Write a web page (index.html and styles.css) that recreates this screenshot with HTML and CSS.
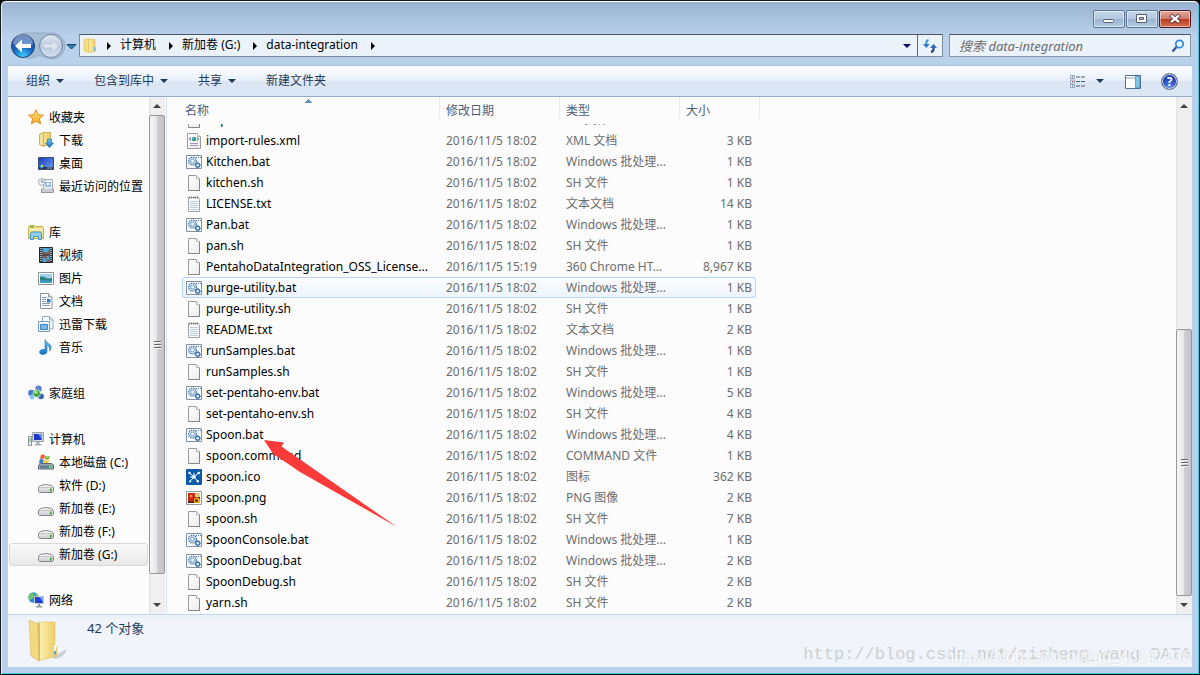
FILE: index.html
```html
<!DOCTYPE html>
<html lang="zh-CN">
<head>
<meta charset="utf-8">
<title>data-integration</title>
<link rel="stylesheet" href="styles.css">
</head>
<body>
<svg class="sprite" aria-hidden="true">
  <defs>
    <linearGradient id="gPage" x1="0" y1="0" x2="1" y2="1"><stop offset="0" stop-color="#fff"/><stop offset="1" stop-color="#ececec"/></linearGradient>
    <linearGradient id="gFold" x1="0" y1="0" x2="1" y2="0"><stop offset="0" stop-color="#fdf3b8"/><stop offset="1" stop-color="#ecca5e"/></linearGradient>
    <linearGradient id="gBlue" x1="0" y1="0" x2="0" y2="1"><stop offset="0" stop-color="#6fc6f3"/><stop offset="1" stop-color="#1272c4"/></linearGradient>
    <linearGradient id="gScreen" x1="0" y1="0" x2="1" y2="1"><stop offset="0" stop-color="#1739b8"/><stop offset="1" stop-color="#6ea4f0"/></linearGradient>
    <linearGradient id="gStar" x1="0" y1="0" x2="0" y2="1"><stop offset="0" stop-color="#fff27a"/><stop offset="1" stop-color="#f7a31c"/></linearGradient>
    <radialGradient id="gBack" cx=".5" cy=".95" r=".9"><stop offset="0" stop-color="#3fd0ff"/><stop offset=".5" stop-color="#1763bd"/><stop offset="1" stop-color="#2b4f9e"/></radialGradient>
    <linearGradient id="gFwd" x1="0" y1="0" x2="0" y2="1"><stop offset="0" stop-color="#e3ebf5"/><stop offset=".5" stop-color="#b9cbe2"/><stop offset="1" stop-color="#d3e0f0"/></linearGradient>
    <linearGradient id="gDrive" x1="0" y1="0" x2="0" y2="1"><stop offset="0" stop-color="#fff"/><stop offset="1" stop-color="#c9c9cf"/></linearGradient>
  </defs>
  <symbol id="page" viewBox="0 0 16 16"><path d="M2.5.5h8l3 3v12h-11z" fill="url(#gPage)" stroke="#9a9a9a"/><path d="M10.500.5v3h3" fill="#fff" stroke="#b5b5b5"/><path d="M13.500 4v11.500h-11" fill="none" stroke="#858585"/></symbol>
  <symbol id="xml" viewBox="0 0 16 16"><path d="M1.500.5h10l3 3v12h-13z" fill="url(#gPage)" stroke="#9a9a9a"/><path d="M11.500.5v3h3" fill="#fff" stroke="#b5b5b5"/><circle cx="8" cy="6" r="2.300" fill="#2a9a8e"/><circle cx="7.300" cy="5.300" r=".8" fill="#8fe0d0"/><path d="M5 4.500L3.300 6 5 7.500M11 4.500L12.700 6 11 7.500" fill="none" stroke="#3f4a78"/><path d="M4 10.500h8M4 12.500h8" stroke="#a294bb"/></symbol>
  <symbol id="txt" viewBox="0 0 16 16"><path d="M2.500 1.500h10l1 2v12h-11z" fill="#fafafa" stroke="#a0a0a0"/><path d="M3 1.500h10" stroke="#777" stroke-width="2" stroke-dasharray="1 1"/><path d="M4 5.500h8M4 7.500h8M4 9.500h8M4 11.500h8M4 13.500h8" stroke="#b9cddd"/></symbol>
  <symbol id="bat" viewBox="0 0 16 16"><path d="M.5 1.500h15v13H.5z" fill="#fafdff" stroke="#8590a0"/><path d="M10 3.500h5" stroke="#5a80aa" stroke-dasharray="1 1"/><circle cx="6.500" cy="7" r="3.900" fill="#dcecf8" stroke="#4f7eaa" stroke-width="1.400" stroke-dasharray="1.500 .8"/><circle cx="6.500" cy="7" r="1.900" fill="#fff" stroke="#6b9ac4"/><circle cx="11.700" cy="11.300" r="2" fill="#e8f3fc" stroke="#4277ac" stroke-width="1.400"/><path d="M11.700 8.300v1M11.700 13.300v1M8.700 11.300h1M13.700 11.300h1" stroke="#4277ac"/></symbol>
  <symbol id="ico" viewBox="0 0 16 16"><rect width="16" height="16" rx="1" fill="#0a5ba8"/><path d="M8 8L3.500 4M8 8l4.500-4M8 8l-4 4.500M8 8l3.500 4M8 8H4M8 8V4" stroke="#fff"/><g fill="#fff"><circle cx="3.500" cy="4" r="1.200"/><circle cx="12.800" cy="4" r="1.300"/><circle cx="4" cy="12.500" r="1"/><circle cx="11.800" cy="12.300" r="1.200"/><circle cx="8" cy="8" r="1.800"/></g></symbol>
  <symbol id="png" viewBox="0 0 16 16"><path d="M.5 1.500h15v13H.5z" fill="#fff" stroke="#999"/><path d="M2 3h12v10H2z" fill="#402015"/><path d="M2 3h7v6l-3 3-4-1z" fill="#c52815"/><path d="M9 3h5v4H9z" fill="#e7c77b"/><circle cx="5" cy="6" r="1.500" fill="#f08a25"/><path d="M8 9l3-2 3 2v4H8z" fill="#f2a611"/><circle cx="10.500" cy="10.500" r="1.500" fill="#56320f"/></symbol>
  <symbol id="star" viewBox="0 0 16 16"><path d="M8 .8l2.100 4.900 5.300.5-4 3.500 1.200 5.200L8 12.200l-4.600 2.700 1.200-5.200-4-3.500 5.300-.5z" fill="url(#gStar)" stroke="#e8872a"/></symbol>
  <symbol id="download" viewBox="0 0 16 16"><path d="M1.500 2.500l4-2h7v13h-7l-4-1z" fill="url(#gFold)" stroke="#cfb057"/><path d="M5.500.5v14l-4-2v-10z" fill="#f6e39a" stroke="#cfb057"/><path d="M9.500 7h4v4h2l-4 4.600L7.500 11h2z" fill="url(#gBlue)" stroke="#2373b8" stroke-width=".7"/></symbol>
  <symbol id="desktop" viewBox="0 0 16 16"><path d="M.5 2.500h15v12H.5z" fill="url(#gScreen)" stroke="#3e4e73"/><path d="M1 12h14v2H1z" fill="#253452"/><circle cx="3.500" cy="11.500" r="1.900" fill="#2a8cd0"/><path d="M3 10h2v2H3z" fill="#e8d052"/><path d="M9 13h5" stroke="#8aa5cf"/></symbol>
  <symbol id="recent" viewBox="0 0 16 16"><path d="M5.500 1.500h9v10h-9z" fill="#eef2f6" stroke="#a7aeb6"/><path d="M7 4h6v5H7z" fill="#9bc0e4"/><path d="M9 5h2v2H9z" fill="#fff"/><path d="M3.500 11h12v3.500h-12z" fill="#c9cdd2" stroke="#93989e"/><path d="M6 9.500h7l1 2H5z" fill="#e1e4e7"/><circle cx="3.800" cy="4" r="3.300" fill="#f4f7fa" stroke="#9da6ae"/><path d="M3.800 2v2.200h1.800" fill="none" stroke="#68737f"/></symbol>
  <symbol id="library" viewBox="0 0 16 16"><path d="M.5 2.500l1-1h5l1 1h7l1 1v11H.5z" fill="#f5df8b" stroke="#c9ac4c"/><path d="M2 3h4" stroke="#4aa54a" stroke-width="1.300"/><path d="M1 5.500h14" stroke="#fff7cd"/><path d="M2.500 9.500l1-1.500h9l1 1.500v6h-3v-3h-5v3h-3z" fill="#8fd0ee" stroke="#4096c4"/></symbol>
  <symbol id="video" viewBox="0 0 16 16"><path d="M1.500.5h13v15h-13z" fill="#303a44" stroke="#1f272e"/><path d="M4.500 1h7v14h-7z" fill="#4da8df"/><path d="M4.500 4l4 2 3-3v5l-3 1 1 4-5-3zM9 13h3v2H8z" fill="#8a5a48"/><path d="M4.500 8h7" stroke="#24313d"/><path d="M3 1v14M13 1v14" stroke="#fff" stroke-width="1.200" stroke-dasharray="1 1"/></symbol>
  <symbol id="picture" viewBox="0 0 16 16"><path d="M.5 2.500h15v12H.5z" fill="#fff" stroke="#8b949c"/><path d="M2 4h12v9H2z" fill="#9ad4f2"/><path d="M2 7c4-2 6 3 12 1v5H2z" fill="#2b7f7c"/><path d="M2 10.500c4-1 8 1 12 0V13H2z" fill="#3d9fca"/></symbol>
  <symbol id="doc" viewBox="0 0 16 16"><path d="M2.500.5h8l3.500 3.500v11.500H2.500z" fill="#fff" stroke="#8b949c"/><path d="M10.500.5v3.500H14" fill="#e8edf2" stroke="#8b949c"/><path d="M4 4.500h5M4 6.500h4M4 8.500h4M4 10.500h8M4 12.500h8" stroke="#8aa2bd"/><path d="M9 6h3.500v3.500H9z" fill="#3579bd"/></symbol>
  <symbol id="thunder" viewBox="0 0 16 16"><path d="M4.500.5h7l3.500 3.500v9H4.500z" fill="#f4f9fd" stroke="#8fabc2"/><path d="M11.500.5V4H15" fill="none" stroke="#8fabc2"/><path d="M.5 5.500h11v10H.5z" fill="#eff6fc" stroke="#7b9ab5"/><path d="M2.500 8.500h7v5h-7z" fill="#73b8ea" stroke="#3b86c4"/></symbol>
  <symbol id="music" viewBox="0 0 16 16"><path d="M7 .5c1 3.500 6.500 4 6 8.500-.2 1.500-1 2.500-1.500 3 .8-3.500-.8-5-2.500-5.500v6c0 2-2 3-4.200 3S1.500 14.300 1.500 13c0-1.700 2.500-3.200 5.500-2.500z" fill="url(#gBlue)" stroke="#2277b5" stroke-width=".6"/></symbol>
  <symbol id="homegroup" viewBox="0 0 16 16"><circle cx="10.500" cy="3.800" r="3.200" fill="#5b82cf"/><circle cx="3.500" cy="8" r="3.300" fill="#4a78c8"/><circle cx="13" cy="11.300" r="2.900" fill="#3563b4"/><circle cx="4" cy="12" r="2.400" fill="#7fc2ed"/><circle cx="8.700" cy="8.500" r="3.800" fill="#41a33f" stroke="#e8f6e4" stroke-width=".7"/><circle cx="8" cy="7.200" r="1.700" fill="#a5e19b"/></symbol>
  <symbol id="computer" viewBox="0 0 16 16"><path d="M4.500 1.500h11v9h-11z" fill="#d7dbe0" stroke="#98a0a8"/><path d="M6 3h8v6H6z" fill="#1c35c4"/><path d="M10 3h4v6z" fill="#6487ea"/><path d="M8.500 11h3v2h2v1.500h-7V13h2z" fill="#a9afb7"/><path d="M.5 5.500h3v9h-3z" fill="#e6e9ec" stroke="#8d949c"/><path d="M2 7v4" stroke="#64b85b"/></symbol>
  <symbol id="osdrive" viewBox="0 0 16 16"><path d="M3 1c2-1 3 0 4 .5L6 5C5 4.500 4 4 2 5z" fill="#ec6134"/><path d="M7.500 1.800c2 1 3 .6 4.500 0L11 5.500c-2 .7-3 .3-4.500-.4z" fill="#80bf3e"/><path d="M1.800 5.600c2-1 3-.2 4 .2L5 9.500C4 9 3 8.500.8 9.500z" fill="#3b82d6"/><path d="M6.300 6c2 1 3 .5 4.500 0L10 9.800c-2 .7-3 .3-4.500-.4z" fill="#f6c531"/><path d="M.5 11l2-1.500h11l2 1.500v4H.5z" fill="#9ba8b3" stroke="#5d6872"/><path d="M2 11.500h9v2.500H2z" fill="#5f7f95"/><path d="M13 11v3.500" stroke="#4bd13e" stroke-width="1.500"/></symbol>
  <symbol id="drive" viewBox="0 0 16 16"><path d="M2.500 8.500q5.500-2 11 0l2 2v4l-1 1h-13l-1-1v-4z" fill="url(#gDrive)" stroke="#85858b"/><path d="M1 10.500h14" stroke="#aaa" stroke-width=".6"/><path d="M12.800 11.500v3" stroke="#3ba82c" stroke-width="1.800"/></symbol>
  <symbol id="network" viewBox="0 0 16 16"><circle cx="5.500" cy="5.500" r="5.200" fill="#2b8bd0"/><path d="M2 2c3-2 5-1 4 2S3 7 2 9C0 6 .5 4 2 2zM7 1c2 0 3 2 3 3H8z" fill="#6ec75c"/><path d="M6.500 4.500h9v7h-9z" fill="#1e3fd0" stroke="#c4cad2"/><path d="M11 5h4v5z" fill="#7b9bf2"/><path d="M10 12h2v2h2v1.500H8V14h2z" fill="#8e98a3"/></symbol>
  <symbol id="folder" viewBox="0 0 16 16"><path d="M2 1.500l5-1v14l-5-1.500z" fill="#f5dd80" stroke="#dfc468" stroke-width=".6"/><path d="M7 1.500h6v12l-6 1z" fill="url(#gFold)" stroke="#dcb855" stroke-width=".6"/><path d="M12 9h1.500v4H12z" fill="#62b3dc"/></symbol>
</svg>

<main class="window">
  <div class="titlebar">
    <button class="win-btn" aria-label="最小化"><svg viewBox="0 0 30 16"><rect x="9.500" y="8.500" width="10" height="3" rx="1" fill="#fff" stroke="#555f70"/></svg></button>
    <button class="win-btn" aria-label="最大化"><svg viewBox="0 0 30 16"><path d="M9.500 3.500h10v8h-10z" fill="#fff" stroke="#555f70"/><path d="M12.500 6.500h4v2h-4z" fill="#a8bdd6" stroke="#555f70"/></svg></button>
    <button class="win-btn close" aria-label="关闭"><svg viewBox="0 0 30 16"><path d="M10.500 4l9 7.500M19.500 4l-9 7.500" stroke="#54333b" stroke-width="4.200"/><path d="M11 4.400l8 6.700M19 4.400l-8 6.700" stroke="#fff" stroke-width="2.400"/></svg></button>
  </div>

  <div class="navbar">
    <svg class="nav-buttons" viewBox="0 0 68 28" role="img" aria-label="后退 前进">
      <path d="M14 1h28a13 13 0 1 1-6 24q-6-3-10 0A13 13 0 1 1 14 1z" fill="#a4bad3" stroke="#8da5c1" opacity=".8"/>
      <circle cx="14" cy="14" r="11.500" fill="url(#gBack)" stroke="#25406f"/>
      <path d="M4 12a10 10 0 0 1 20 0q-10 4-20 0z" fill="#fff" opacity=".35"/>
      <path d="M6 14l7-6.500v4.500h9v4h-9v4.500z" fill="#fff"/>
      <circle cx="42" cy="14" r="11.500" fill="url(#gFwd)" stroke="#71839b"/>
      <path d="M50 14l-7-6.500v4.500h-9v4h9v4.500z" fill="#dbe4ef" stroke="#b2c2d6" stroke-width=".7"/>
      <path d="M58 12.500h9l-4.500 4.500z" fill="#2c82b5" stroke="#15466d"/>
    </svg>
    <nav class="address" aria-label="地址">
      <svg class="icon"><use href="#folder"/></svg>
      <span class="crumb-arrow first"></span><a href="#">计算机</a>
      <span class="crumb-arrow"></span><a href="#">新加卷 (G:)</a>
      <span class="crumb-arrow"></span><a href="#">data-integration</a>
      <span class="crumb-arrow"></span>
      <span class="spacer"></span>
      <button class="history" aria-label="历史记录"><span class="down navy"></span></button>
      <button class="refresh" aria-label="刷新"><svg viewBox="0 0 16 14"><path d="M6.500 1Q4 1.500 4.200 5" fill="none" stroke="#3a9bd8" stroke-width="2"/><path d="M.8 5h7L4.300 9z" fill="#2f7fc9"/><path d="M9 13q2.800-.5 2.600-4" fill="none" stroke="#213f8e" stroke-width="2"/><path d="M8 9h7l-3.500-4z" fill="#2f66b9"/></svg></button>
    </nav>
    <label class="search">
      <input type="text" placeholder="搜索 data-integration" aria-label="搜索">
      <svg viewBox="0 0 14 14"><path d="M1.500 12.500l4-4.500" stroke="#2c4fa8" stroke-width="2.200"/><circle cx="8.500" cy="5" r="3.700" fill="#e9f5ff" stroke="#2f86cf" stroke-width="1.700"/></svg>
    </label>
  </div>

  <div class="toolbar">
    <button>组织<span class="down"></span></button>
    <button>包含到库中<span class="down"></span></button>
    <button>共享<span class="down"></span></button>
    <button>新建文件夹</button>
    <span class="spacer"></span>
    <button class="view" aria-label="更改视图"><svg viewBox="0 0 16 14"><path d="M.5.5h4v3h-4zM.5 5h4v3h-4zM.5 9.500h4v3h-4z" fill="#fff" stroke="#93a4bb"/><path d="M2 1.500h1.200v1H2z" fill="#345"/><path d="M2 6h1.200v1H2z" fill="#c22"/><path d="M2 10.500h1.200v1H2z" fill="#345"/><path d="M6 2h9M6 6.500h9M6 11h9" stroke="#4c6078" stroke-dasharray="4 1"/></svg><span class="down"></span></button>
    <button class="pane" aria-label="预览窗格"><svg viewBox="0 0 16 14"><path d="M.5.500h15v13H.5z" fill="#fff" stroke="#51708f"/><path d="M1 3h9" stroke="#8da3b8"/><path d="M10.500 1H15v12h-4.500z" fill="#7cc7e4" stroke="#51708f" stroke-width=".6"/></svg></button>
    <button class="help" aria-label="帮助">?</button>
  </div>

  <div class="content">
    <nav class="tree" aria-label="导航窗格">
      <ul>
        <li class="root"><svg class="icon"><use href="#star"/></svg>收藏夹</li>
        <li><svg class="icon"><use href="#download"/></svg>下载</li>
        <li><svg class="icon"><use href="#desktop"/></svg>桌面</li>
        <li><svg class="icon"><use href="#recent"/></svg>最近访问的位置</li>
      </ul>
      <ul>
        <li class="root"><svg class="icon"><use href="#library"/></svg>库</li>
        <li><svg class="icon"><use href="#video"/></svg>视频</li>
        <li><svg class="icon"><use href="#picture"/></svg>图片</li>
        <li><svg class="icon"><use href="#doc"/></svg>文档</li>
        <li><svg class="icon"><use href="#thunder"/></svg>迅雷下载</li>
        <li><svg class="icon"><use href="#music"/></svg>音乐</li>
      </ul>
      <ul>
        <li class="root"><svg class="icon"><use href="#homegroup"/></svg>家庭组</li>
      </ul>
      <ul>
        <li class="root"><svg class="icon"><use href="#computer"/></svg>计算机</li>
        <li><svg class="icon"><use href="#osdrive"/></svg>本地磁盘 (C:)</li>
        <li><svg class="icon"><use href="#drive"/></svg>软件 (D:)</li>
        <li><svg class="icon"><use href="#drive"/></svg>新加卷 (E:)</li>
        <li><svg class="icon"><use href="#drive"/></svg>新加卷 (F:)</li>
        <li class="selected"><svg class="icon"><use href="#drive"/></svg>新加卷 (G:)</li>
      </ul>
      <ul>
        <li class="root"><svg class="icon"><use href="#network"/></svg>网络</li>
      </ul>
    </nav>
    <div class="scrollbar tree-scroll"><span class="sb-arrow up"></span><span class="thumb"></span><span class="rest"></span><span class="sb-arrow dn"></span></div>

    <section class="files">
      <table>
        <colgroup><col class="c-name"><col class="c-date"><col class="c-type"><col class="c-size"><col class="c-edge"></colgroup>
        <thead><tr><th class="sorted">名称</th><th>修改日期</th><th>类型</th><th colspan="2">大小</th></tr></thead>
        <tbody>
          <tr class="cut"><td><div><svg class="icon"><use href="#page"/></svg>import.sh</div></td><td><div>2016/11/5 18:02</div></td><td><div>SH 文件</div></td><td><div>1 KB</div></td></tr>
          <tr><td><svg class="icon"><use href="#xml"/></svg>import-rules.xml</td><td>2016/11/5 18:02</td><td>XML 文档</td><td>3 KB</td></tr>
          <tr><td><svg class="icon"><use href="#bat"/></svg>Kitchen.bat</td><td>2016/11/5 18:02</td><td>Windows 批处理...</td><td>1 KB</td></tr>
          <tr><td><svg class="icon"><use href="#page"/></svg>kitchen.sh</td><td>2016/11/5 18:02</td><td>SH 文件</td><td>1 KB</td></tr>
          <tr><td><svg class="icon"><use href="#txt"/></svg>LICENSE.txt</td><td>2016/11/5 18:02</td><td>文本文档</td><td>14 KB</td></tr>
          <tr><td><svg class="icon"><use href="#bat"/></svg>Pan.bat</td><td>2016/11/5 18:02</td><td>Windows 批处理...</td><td>1 KB</td></tr>
          <tr><td><svg class="icon"><use href="#page"/></svg>pan.sh</td><td>2016/11/5 18:02</td><td>SH 文件</td><td>1 KB</td></tr>
          <tr><td><svg class="icon"><use href="#page"/></svg>PentahoDataIntegration_OSS_License...</td><td>2016/11/5 15:19</td><td>360 Chrome HT...</td><td>8,967 KB</td></tr>
          <tr class="hover"><td><svg class="icon"><use href="#bat"/></svg>purge-utility.bat</td><td>2016/11/5 18:02</td><td>Windows 批处理...</td><td>1 KB</td></tr>
          <tr><td><svg class="icon"><use href="#page"/></svg>purge-utility.sh</td><td>2016/11/5 18:02</td><td>SH 文件</td><td>1 KB</td></tr>
          <tr><td><svg class="icon"><use href="#txt"/></svg>README.txt</td><td>2016/11/5 18:02</td><td>文本文档</td><td>2 KB</td></tr>
          <tr><td><svg class="icon"><use href="#bat"/></svg>runSamples.bat</td><td>2016/11/5 18:02</td><td>Windows 批处理...</td><td>1 KB</td></tr>
          <tr><td><svg class="icon"><use href="#page"/></svg>runSamples.sh</td><td>2016/11/5 18:02</td><td>SH 文件</td><td>1 KB</td></tr>
          <tr><td><svg class="icon"><use href="#bat"/></svg>set-pentaho-env.bat</td><td>2016/11/5 18:02</td><td>Windows 批处理...</td><td>5 KB</td></tr>
          <tr><td><svg class="icon"><use href="#page"/></svg>set-pentaho-env.sh</td><td>2016/11/5 18:02</td><td>SH 文件</td><td>4 KB</td></tr>
          <tr><td><svg class="icon"><use href="#bat"/></svg>Spoon.bat</td><td>2016/11/5 18:02</td><td>Windows 批处理...</td><td>4 KB</td></tr>
          <tr><td><svg class="icon"><use href="#page"/></svg>spoon.command</td><td>2016/11/5 18:02</td><td>COMMAND 文件</td><td>1 KB</td></tr>
          <tr><td><svg class="icon"><use href="#ico"/></svg>spoon.ico</td><td>2016/11/5 18:02</td><td>图标</td><td>362 KB</td></tr>
          <tr><td><svg class="icon"><use href="#png"/></svg>spoon.png</td><td>2016/11/5 18:02</td><td>PNG 图像</td><td>2 KB</td></tr>
          <tr><td><svg class="icon"><use href="#page"/></svg>spoon.sh</td><td>2016/11/5 18:02</td><td>SH 文件</td><td>7 KB</td></tr>
          <tr><td><svg class="icon"><use href="#bat"/></svg>SpoonConsole.bat</td><td>2016/11/5 18:02</td><td>Windows 批处理...</td><td>1 KB</td></tr>
          <tr><td><svg class="icon"><use href="#bat"/></svg>SpoonDebug.bat</td><td>2016/11/5 18:02</td><td>Windows 批处理...</td><td>2 KB</td></tr>
          <tr><td><svg class="icon"><use href="#page"/></svg>SpoonDebug.sh</td><td>2016/11/5 18:02</td><td>SH 文件</td><td>2 KB</td></tr>
          <tr><td><svg class="icon"><use href="#page"/></svg>yarn.sh</td><td>2016/11/5 18:02</td><td>SH 文件</td><td>2 KB</td></tr>
        </tbody>
      </table>
      <svg class="pointer" viewBox="0 0 134 88" aria-hidden="true"><path d="M0 0l20 2.500-2.500 4L133 87 36 32 14 17l-4.500-2.500z" fill="#fb3b3a"/></svg>
    </section>
    <div class="scrollbar file-scroll"><span class="sb-arrow up"></span><span class="rest"></span><span class="thumb"></span><span class="sb-arrow dn"></span></div>
  </div>

  <footer class="details">
    <svg class="big-folder" viewBox="0 0 40 44">
      <path d="M24 38l15-8q-2 8-12 10z" fill="#9aa3b0" opacity=".45"/>
      <path d="M10 3h17v23l2 3v8l-19 5z" fill="url(#gFold)" stroke="#dfc26a" stroke-width=".6"/>
      <path d="M1 1l9 4v17l1 2v18l-8-5z" fill="#f3d980" stroke="#d8b95d" stroke-width=".6"/>
      <path d="M10 5l2-2v38l-1 1z" fill="#c39e3c" opacity=".6"/>
      <path d="M26 27l2-2v10l-2 1z" fill="#fff"/><path d="M26 32h2v3l-2 1z" fill="#4ba8dc"/>
    </svg>
    <p>42 个对象</p>
    <span class="mark mark-a">http://blog.csdn.net/zisheng_wang DATA</span>
    <span class="mark mark-b">https://blog.csdn.net/qq_43147136</span>
  </footer>
</main>
</body>
</html>
```
FILE: styles.css
```css
* { box-sizing: border-box; }
html, body { height: 100%; }
body {
  margin: 0;
  background: #000;
  color: #000;
  font: 12px/20px "Noto Sans", "Noto Sans CJK SC", sans-serif;
}
.sprite { position: absolute; width: 0; height: 0; }
button { margin: 0; padding: 0; border: 0; background: none; font: inherit; color: inherit; }
a { color: inherit; text-decoration: none; }
.icon { width: 16px; height: 16px; flex: none; }
.spacer { flex: 1; }

.window {
  display: flex;
  flex-direction: column;
  height: 100vh;
  padding: 0 6px 7px;
  border: 1px solid #16181c;
  border-radius: 6px 6px 0 0;
  box-shadow: inset 0 1px #fff, inset 1px 0 #e6f0fa, inset -1px -1px #3cc4de;
  background: linear-gradient(#9ab3d1, #b9d1ea 36px, #b9d1ea);
}

.titlebar { display: flex; justify-content: flex-end; gap: 1px; padding: 9px 2px 0 0; height: 33px; flex: none; }
.win-btn {
  width: 32px;
  height: 18px;
  border: 1px solid #5f7696;
  border-radius: 2px;
  background: linear-gradient(#c6d6e9, #b4c8e0 48%, #9ab3d0 50%, #b4cbe5);
  box-shadow: inset 0 0 0 1px rgba(255, 255, 255, .5);
}
.win-btn svg { display: block; width: 30px; height: 16px; }
.win-btn.close { border-color: #51192a; background: linear-gradient(#e3a598, #d07d6c 48%, #b93b22 50%, #d2704f); }

.navbar { display: flex; flex: none; height: 31px; padding: 0 2px; }
.nav-buttons { width: 68px; height: 28px; flex: none; margin: -2px 2px 0 0; }
.address {
  display: flex;
  flex: 1;
  align-items: center;
  height: 23px;
  padding-left: 2px;
  line-height: 18px;
  border: 1px solid #7e8c9c;
  border-top-color: #4d5763;
  background: #ecf2fa;
}
.crumb-arrow { margin: 0 9px 0 13px; border: 4px solid transparent; border-left-color: #000; border-right: 0; }
.crumb-arrow.first { margin-left: 9px; }
.address a { margin-bottom: 1px; }
.history { width: 20px; height: 21px; }
.refresh { width: 25px; height: 21px; border-left: 1px solid #5d6773; }
.refresh svg { display: block; width: 16px; height: 14px; margin: auto; }
.down { display: inline-block; vertical-align: middle; margin: 0 0 2px 6px; border: 4px solid transparent; border-top-color: #1e395b; border-bottom: 0; }
.down.navy { margin: 0; border-top-color: #000060; }
.search {
  display: flex;
  align-items: center;
  width: 242px;
  height: 23px;
  margin-left: 6px;
  padding: 0 5px 0 9px;
  border: 1px solid #8995a3;
  border-top-color: #4d5763;
  background: #ecf2fa;
}
.search input { flex: 1; min-width: 0; padding: 0; border: 0; outline: 0; background: none; font: inherit; font-size: 13px; font-style: italic; }
.search input::placeholder { color: #6d6d6d; opacity: 1; }
.search svg { width: 14px; height: 14px; }

.toolbar {
  display: flex;
  flex: none;
  align-items: center;
  gap: 30px;
  height: 32px;
  margin: 0 1px;
  padding: 0 14px 0 18px;
  border-bottom: 1px solid #94abcd;
  border-top: 1px solid #a9c0db;
  background: linear-gradient(#fdfeff, #e9f0fa 48%, #dbe5f4 50%, #dce7f5);
  color: #1e395b;
}
.toolbar svg { width: 16px; height: 14px; vertical-align: middle; }
.view .down { margin-left: 10px; }
.pane { margin-left: -9px; }
.help {
  width: 17px;
  height: 17px;
  margin-left: -10px;
  border: 1px solid #6b7484;
  border-radius: 50%;
  background: radial-gradient(circle at 50% 85%, #5c8cf0, #1b36a6 65%);
  box-shadow: inset 0 0 0 1px #cdd6e8;
  color: #fff;
  font-weight: bold;
  line-height: 15px;
}

.content { display: flex; flex: 1; min-height: 0; margin: 0 1px; background: #fcfcfc; }
.tree { width: 141px; flex: none; padding: 9px 0 0; overflow: hidden; }
.tree ul { margin: 0 0 23px; padding: 0; list-style: none; }
.tree li { display: flex; align-items: center; gap: 5px; height: 23px; padding-left: 28px; margin: 0 1px; border: 1px solid transparent; white-space: nowrap; }
.tree li.root { padding-left: 18px; }
.tree .icon { margin-bottom: 2px; }
.tree li.selected { border-color: #d9d9d9; border-radius: 3px; background: linear-gradient(#fafafa, #e8e8e8); }

.scrollbar { display: flex; flex-direction: column; flex: none; width: 16px; background: linear-gradient(90deg, #e4e4e4, #f0f0f0 3px, #efefef); }
.tree-scroll { margin-right: 1px; }
.sb-arrow { flex: none; display: flex; justify-content: center; align-items: center; height: 18px; }
.sb-arrow::after { content: ""; border: 4px solid transparent; }
.sb-arrow.up::after { border-bottom-color: #444; border-top: 0; }
.sb-arrow.dn::after { border-top-color: #444; border-bottom: 0; }
.thumb {
  display: flex;
  align-items: center;
  justify-content: center;
  border: 1px solid #979797;
  border-radius: 2px;
  background: linear-gradient(90deg, #f6f6f6, #e6e6e8 48%, #cfcfd3 52%, #c2c2c7);
}
.thumb::after { content: ""; width: 7px; height: 8px; background: repeating-linear-gradient(#666 0 1px, #f4f4f4 1px 2px, transparent 2px 3px); }
.tree-scroll .thumb { flex: 459; }
.tree-scroll .rest { flex: 22; }
.file-scroll .thumb { flex: 266; }
.file-scroll .rest { flex: 215; }

.files { position: relative; flex: 1; min-width: 0; padding-left: 15px; overflow: hidden; border-left: 1px solid #d5e3f2; }
table { width: 578px; table-layout: fixed; border-collapse: separate; border-spacing: 0; }
.c-name { width: 258px; }
.c-date, .c-type { width: 120px; }
.c-size { width: 76px; }
.c-edge { width: 4px; }
th {
  height: 27px;
  padding: 1px 0 0 6px;
  text-align: left;
  font-weight: normal;
  color: #4c607a;
  background: linear-gradient(#dfe9f5, #e3ecf6 60%, #fcfcfc) right / 1px 100% no-repeat;
}
th:first-child { padding-left: 3px; }
th.sorted {
  background:
    conic-gradient(from 135deg at 50% 0, #5b94b4 90deg, transparent 0) 123px 2px / 7px 4px no-repeat,
    linear-gradient(#dfe9f5, #e3ecf6 60%, #fcfcfc) right / 1px 100% no-repeat;
}
td { height: 21px; padding: 0 0 0 6px; border: 0 solid #b8d6fb; border-width: 1px 0; border-color: transparent; line-height: 19px; color: #6d6d6d; white-space: nowrap; }
td:first-child { padding-left: 3px; border-left-width: 1px; color: #000; }
td:nth-child(4) { padding: 0 3px 0 0; border-right-width: 1px; text-align: right; }
td .icon { margin: -1px 4px 1px 0; vertical-align: middle; }
.hover td { border-color: #b8d6fb; background: linear-gradient(#fbfdff, #edf4fd); }
.hover td:first-child { border-radius: 3px 0 0 3px; }
.hover td:nth-child(4) { border-radius: 0 3px 3px 0; }
.cut td { height: 6px; border-top: 0; }
.cut div { display: flex; align-items: flex-end; height: 5px; overflow: hidden; }
.cut td:nth-child(4) div { justify-content: flex-end; }
.pointer { position: absolute; left: 97px; top: 343px; width: 134px; height: 88px; }

.details {
  position: relative;
  display: flex;
  flex: none;
  gap: 19px;
  height: 53px;
  margin: 0 1px;
  padding: 4px 0 0 20px;
  border-top: 1px solid #c3d6ea;
  background: linear-gradient(#e9f0f8, #f1f4fb 5px);
  color: #1e395b;
}
.big-folder { width: 40px; height: 44px; }
.details p { margin: 0; font-size: 13px; line-height: 18px; }
.mark { position: absolute; white-space: nowrap; }
.mark-a { right: 1px; bottom: 2px; color: #cdd0d1; font: 17px/20px "Liberation Mono", monospace; }
.mark-b { right: 1px; bottom: 0; color: #fff; font: 16px/20px "Liberation Sans", sans-serif; text-shadow: 0 0 2px #c4c8cf; opacity: .8; }
```
